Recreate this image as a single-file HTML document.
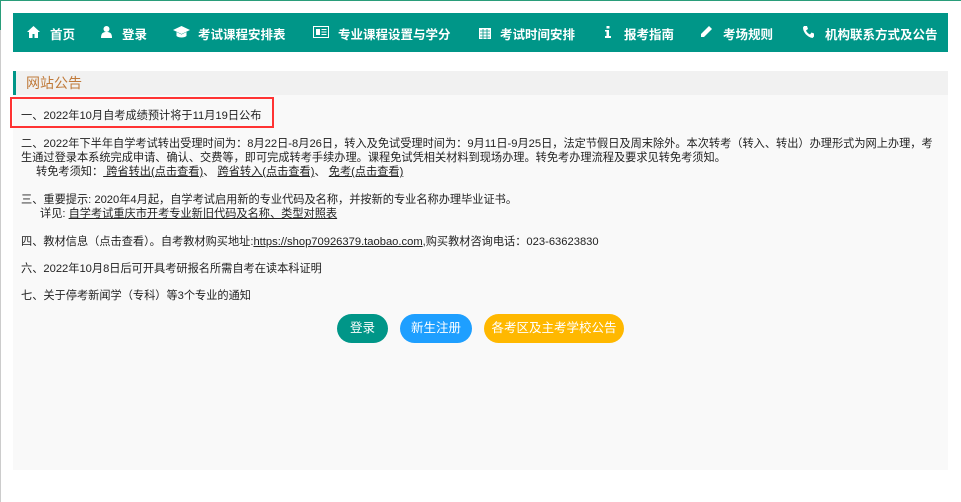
<!DOCTYPE html>
<html><head><meta charset="utf-8"><style>
*{margin:0;padding:0;box-sizing:border-box}
body{width:961px;height:502px;background:#fff;position:relative;overflow:hidden;font-family:"Liberation Sans","Noto Sans CJK SC",sans-serif;color:#222}
.topl{position:absolute;left:0;top:0;width:961px;height:1px;background:#2a9d7a}
.leftl{position:absolute;left:0;top:0;width:1px;height:502px;background:#ccc}
.leftg{position:absolute;left:0;top:0;width:1px;height:30px;background:#2a9d7a}
.nav{position:absolute;left:13px;top:13px;width:935px;height:39px;background:#009688;color:#fff;font-size:12.5px;font-weight:bold}
.nav span{position:absolute;top:11px;white-space:nowrap}
.nav svg{position:absolute;top:13px}
.panel{position:absolute;left:13px;top:71px;width:935px;height:399px;background:#f9f9f9}
.ph{height:24px;background:#f1f1f1;border-left:3px solid #009688;color:#c07a3a;font-size:14px;line-height:24px;padding-left:10px}
.t{position:absolute;font-size:11.2px;white-space:nowrap;color:#222}
.t u{text-decoration:underline}
.red{position:absolute;left:10px;top:97px;width:264px;height:31px;border:2px solid #f33}
.btn{position:absolute;top:314px;height:29px;border-radius:15px;color:#fff;font-size:12.5px;line-height:29px;text-align:center}
</style></head><body>
<div class="topl"></div><div class="leftl"></div><div class="leftg"></div>
<div class="nav">
<svg style="left:14px" width="13" height="12" viewBox="0 0 13 12"><path d="M6.5 0L0 6h2v6h3.5V8h2v4H11V6h2z" fill="#fff"/></svg><span style="left:37px">首页</span>
<svg style="left:88px" width="11" height="12" viewBox="0 0 11 12"><circle cx="5.5" cy="3" r="3" fill="#fff"/><path d="M0 12c0-5 2-6 5.5-6S11 7 11 12z" fill="#fff"/></svg><span style="left:109px">登录</span>
<svg style="left:160px" width="17" height="12" viewBox="0 0 17 12"><path d="M8.5 0L0 4l8.5 4L17 4z M3.5 6v4c2 2 8 2 10 0V6l-5 2.5z" fill="#fff"/></svg><span style="left:185px">考试课程安排表</span>
<svg style="left:300px" width="16" height="12" viewBox="0 0 16 12"><rect x="0.5" y="0.5" width="15" height="11" fill="none" stroke="#fff"/><rect x="3" y="3" width="4" height="6" fill="#fff"/><path d="M8.5 3.5h5M8.5 6h5M8.5 8.5h5" stroke="#fff"/></svg><span style="left:325px">专业课程设置与学分</span>
<svg style="left:466px" width="12" height="13" viewBox="0 0 12 13"><rect x="0" y="2" width="12" height="11" fill="#fff"/><path d="M1 5h10M1 8h10M1 11h10M4 3v10M8 3v10" stroke="#009688" stroke-width="0.8"/></svg><span style="left:487px">考试时间安排</span>
<svg style="left:592px" width="6" height="12" viewBox="0 0 6 12"><rect x="1.5" y="0" width="3" height="2.5" fill="#fff"/><path d="M0 4h4v6h2v2H0v-2h1.5V5.5H0z" fill="#fff"/></svg><span style="left:611px">报考指南</span>
<svg style="left:687px" width="12" height="12" viewBox="0 0 12 12"><path d="M9 0l3 3-8 8H1V8z" fill="#fff"/></svg><span style="left:710px">考场规则</span>
<svg style="left:790px" width="11" height="12" viewBox="0 0 11 12"><path d="M1 0h3l1 3-2 1.5c1 2 2 3 4 4L8.5 6.5l2.5 1v3L9.5 12C4 11 0 6 0 1.5z" fill="#fff"/></svg><span style="left:812px">机构联系方式及公告</span>
</div>
<div class="panel"><div class="ph">网站公告</div></div>
<div class="red"></div>
<div class="t" style="left:21px;top:107px">一、2022年10月自考成绩预计将于11月19日公布</div>
<div class="t" style="left:21px;top:135px">二、2022年下半年自学考试转出受理时间为：8月22日-8月26日，转入及免试受理时间为：9月11日-9月25日，法定节假日及周末除外。本次转考（转入、转出）办理形式为网上办理，考</div>
<div class="t" style="left:21px;top:149px">生通过登录本系统完成申请、确认、交费等，即可完成转考手续办理。课程免试凭相关材料到现场办理。转免考办理流程及要求见转免考须知。</div>
<div class="t" style="left:36px;top:163px">转免考须知：<u>&nbsp;跨省转出(点击查看)</u>、 <u>跨省转入(点击查看)</u>、 <u>免考(点击查看)</u></div>
<div class="t" style="left:21px;top:191px">三、重要提示: 2020年4月起，自学考试启用新的专业代码及名称，并按新的专业名称办理毕业证书。</div>
<div class="t" style="left:40px;top:205px">详见: <u>自学考试重庆市开考专业新旧代码及名称、类型对照表</u></div>
<div class="t" style="left:21px;top:233px">四、教材信息（点击查看）。自考教材购买地址:<u>https://shop70926379.taobao.com</u>,购买教材咨询电话：023-63623830</div>
<div class="t" style="left:21px;top:260px">六、2022年10月8日后可开具考研报名所需自考在读本科证明</div>
<div class="t" style="left:21px;top:287px">七、关于停考新闻学（专科）等3个专业的通知</div>
<div class="btn" style="left:337px;width:51px;background:#009688">登录</div>
<div class="btn" style="left:400px;width:72px;background:#1e9fff">新生注册</div>
<div class="btn" style="left:484px;width:140px;background:#ffb800">各考区及主考学校公告</div>
</body></html>
